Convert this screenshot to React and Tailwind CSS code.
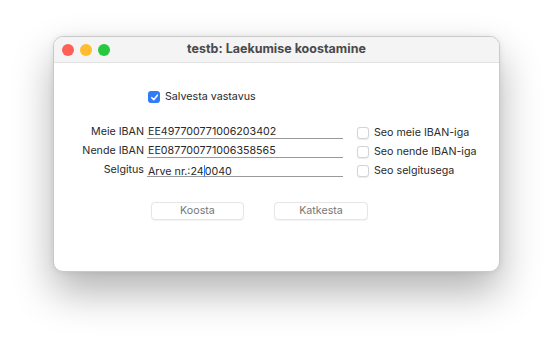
import React from "react";

function Check({ checked }) {
  if (checked) {
    return (
      <span className="flex h-[12px] w-[12px] items-center justify-center rounded-[3px] bg-[#2f7cf6]">
        <svg width="9" height="9" viewBox="0 0 10 10">
          <path d="M2 5.2 L4.2 7.4 L8.2 2.4" fill="none" stroke="white" strokeWidth="1.7" strokeLinecap="round" strokeLinejoin="round" />
        </svg>
      </span>
    );
  }
  return <span className="block h-[12px] w-[12px] rounded-[3px] border border-[#d4d4d4] bg-white shadow-[0_0.5px_1px_rgba(0,0,0,0.08)]" />;
}

const rows = [
  { label: "Meie IBAN", value: "EE497700771006203402", link: "Seo meie IBAN-iga" },
  { label: "Nende IBAN", value: "EE087700771006358565", link: "Seo nende IBAN-iga" },
  { label: "Selgitus", value: "Arve nr.:240040", link: "Seo selgitusega", caret: true },
];

export default function App() {
  return (
    <div className="h-[343px] w-[554px] overflow-hidden bg-white pt-[36px] font-['Inter','Liberation_Sans',sans-serif] text-[10.7px] text-[#2a2a2a]">
      <div className="ml-[53px] h-[236px] w-[447px] overflow-hidden rounded-[10px] border border-[#c9c9c9] bg-white shadow-[0_20px_40px_rgba(0,0,0,0.3),0_0_6px_rgba(0,0,0,0.08)]">
        <div className="relative flex h-[26px] items-center border-b border-[#e2e2e2] bg-[#f4f4f4]">
          <div className="ml-[8px] flex gap-[6px]">
            <span className="h-[12px] w-[12px] rounded-full bg-[#fe5f57]" />
            <span className="h-[12px] w-[12px] rounded-full bg-[#febc2e]" />
            <span className="h-[12px] w-[12px] rounded-full bg-[#28c840]" />
          </div>
          <div className="absolute inset-0 flex items-center justify-center text-[12.5px] font-bold text-[#4a4a4a]">
            testb: Laekumise koostamine
          </div>
        </div>

        <div className="flex flex-col">
          <div className="ml-[94px] mt-[26px] flex items-center gap-[5px]">
            <Check checked />
            <span>Salvesta vastavus</span>
          </div>

          <div className="mt-[18px] flex flex-col">
            {rows.map((r) => (
              <div key={r.label} className="flex h-[19px] items-start leading-[13px]">
                <div className="w-[90px] pt-[2px] text-right">{r.label}</div>
                <div className="ml-[3px] h-[16px] w-[196px] border-b border-[#9a9a9a] pl-[1px] pt-[2px]">
                  {r.caret ? (
                    <span>
                      Arve nr.:24
                      <span className="inline-block h-[12px] w-px translate-y-[2px] bg-[#2f7cf6]" />
                      0040
                    </span>
                  ) : (
                    r.value
                  )}
                </div>
                <div className="ml-[14px] flex items-center gap-[5px] self-center">
                  <Check />
                  <span>{r.link}</span>
                </div>
              </div>
            ))}
          </div>

          <div className="mt-[22px] flex">
            <button className="ml-[97px] h-[18px] w-[93px] rounded-[4px] border border-[#e6e6e6] bg-white text-[10.7px] text-[#777] shadow-[0_0.5px_1px_rgba(0,0,0,0.05)]">
              Koosta
            </button>
            <button className="ml-[30px] h-[18px] w-[94px] rounded-[4px] border border-[#e6e6e6] bg-white text-[10.7px] text-[#777] shadow-[0_0.5px_1px_rgba(0,0,0,0.05)]">
              Katkesta
            </button>
          </div>
        </div>
      </div>
    </div>
  );
}
